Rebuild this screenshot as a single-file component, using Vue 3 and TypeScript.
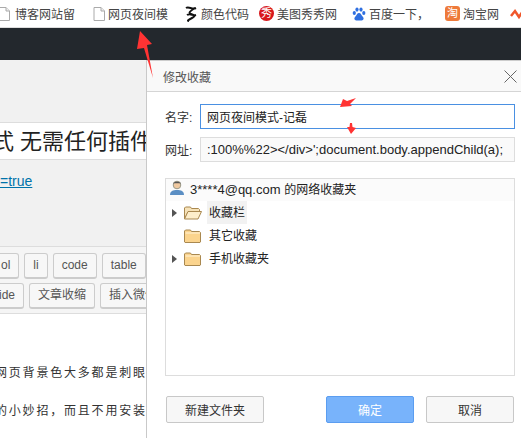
<script setup lang="ts">
const row1 = ['ol', 'li', 'code', 'table']
const row2 = ['ide', '文章收缩', '插入微信']
</script>

<template>
  <div class="root">
    <header class="bookmarks">
      <span class="mark m1"><svg class="ic" viewBox="0 0 12 14"><path d="M-1 .5h7l3.500 3.500v9.500H-1z" fill="#fff" stroke="#aaa"/><path d="M6 .5V4h3.500" fill="#eee" stroke="#aaa"/></svg>博客网站留</span>
      <span class="mark m2"><svg class="ic" viewBox="0 0 12 14"><path d="M1 .5h7l3.500 3.500v9.500H1z" fill="#fff" stroke="#aaa"/><path d="M8 .5V4h3.500" fill="#eee" stroke="#aaa"/></svg>网页夜间模</span>
      <span class="mark m3"><svg class="ic2" viewBox="0 0 14 16"><path d="M2 2c3-2 6 2 10 0M11 2C6 5 4 7 7 8s5 2 1 4-5 3-3 3M3 9c3-2 6 1 9 0" fill="none" stroke="#111" stroke-width="2"/></svg>颜色代码</span>
      <span class="mark m4"><span class="xiu">秀</span>美图秀秀网</span>
      <span class="mark m5"><svg class="ic3" viewBox="0 0 14 14"><g fill="#2f6fe0"><ellipse cx="2.300" cy="6" rx="1.600" ry="2"/><ellipse cx="5" cy="2.600" rx="1.600" ry="2.100"/><ellipse cx="9" cy="2.600" rx="1.600" ry="2.100"/><ellipse cx="11.800" cy="6" rx="1.600" ry="2"/><path d="M7 6c2 0 2 2 4 4 1.500 2 0 3.500-2 3.500H5c-2 0-3.500-1.500-2-3.500 2-2 2-4 4-4z"/></g></svg>百度一下，</span>
      <span class="mark m6"><span class="tao">淘</span>淘宝网</span>
      <svg class="ic4" viewBox="0 0 14 14"><path d="M1 9l4-5 4 6 4-6" fill="none" stroke="#f0562a" stroke-width="2.500"/></svg>
    </header>
    <div class="darkbar"></div>

    <main class="content">
      <section class="page">
        <div class="top-strip"></div>
        <h1 class="title">式 无需任何插件</h1>
        <div class="link-panel"><a class="link">=true</a></div>
        <div class="quick">
          <div class="qrow r1"><span v-for="t in row1" :key="t" class="qbtn">{{ t }}</span></div>
          <div class="qrow r2"><span v-for="t in row2" :key="t" class="qbtn">{{ t }}</span></div>
        </div>
        <div class="article">
          <p class="l1">网页背景色大多都是刺眼的</p>
          <p class="l2">的小妙招，而且不用安装任何</p>
        </div>
      </section>

      <section class="dialog">
        <div class="dhead">
          <span>修改收藏</span>
          <svg class="close" viewBox="0 0 13 13"><path d="M.5.5l12 12M12.500.5l-12 12" stroke="#666" fill="none"/></svg>
        </div>
        <div class="dbody">
          <div class="field">
            <label>名字:</label>
            <div class="inp active">网页夜间模式-记磊</div>
          </div>
          <div class="field f2">
            <label>网址:</label>
            <div class="inp url">:100%%22&gt;&lt;/div&gt;';document.body.appendChild(a);</div>
          </div>
          <div class="tree">
            <div class="account">
              <svg class="user" viewBox="0 0 16 16"><circle cx="8" cy="5" r="3.800" fill="#f0c9a0" stroke="#998"/><path d="M4 3.500C5 1 11 1 12 3.500 10 3 6 3 4 3.500z" fill="#555"/><path d="M1 15c0-4 3-5 7-5s7 1 7 5z" fill="#5b8fc4"/></svg>
              <span><span class="mail">3****4@qq.com </span>的网络收藏夹</span>
            </div>
            <div class="node">
              <span class="tri"></span>
              <svg class="folder" viewBox="0 0 18 14"><path d="M.5 13V2l1-1h5l1 1.500h7l1 1V6H4z" fill="#f6e2b8" stroke="#a98850"/><path d="M.5 13L4 5.500h13.500L14 13z" fill="#fdeecb" stroke="#a98850"/></svg>
              <span class="nlabel sel">收藏栏</span>
            </div>
            <div class="node">
              <span class="tri none"></span>
              <svg class="folder" viewBox="0 0 18 14"><path d="M1 13.500l-.5-.5V2l1-1h5l1 1.500h8l1 1V13l-.5.500z" fill="#fbd48e" stroke="#a98850"/><path d="M1.500 4h14.500" stroke="#fff3d8"/></svg>
              <span class="nlabel">其它收藏</span>
            </div>
            <div class="node">
              <span class="tri"></span>
              <svg class="folder" viewBox="0 0 18 14"><path d="M1 13.500l-.5-.5V2l1-1h5l1 1.500h8l1 1V13l-.5.500z" fill="#fbd48e" stroke="#a98850"/><path d="M1.500 4h14.500" stroke="#fff3d8"/></svg>
              <span class="nlabel">手机收藏夹</span>
            </div>
          </div>
          <div class="actions">
            <button class="btn new">新建文件夹</button>
            <span class="grow"></span>
            <button class="btn ok">确定</button>
            <button class="btn cancel">取消</button>
          </div>
        </div>
      </section>
    </main>

    <svg class="arrow a1" viewBox="0 0 20 50"><path d="M4 1L16 14 11 15 17 48 8 18 1 19z" fill="#f33"/></svg>
    <svg class="arrow a2" viewBox="0 0 18 12"><path d="M1 10L4 2 8 4 17 1 11 7 13 9z" fill="#f33"/></svg>
    <svg class="arrow a3" viewBox="0 0 11 13"><path d="M4 1L6 1 6.500 5 10 6 5 12 1 5 3.500 5z" fill="#f33"/></svg>
  </div>
</template>

<style>
html, body { margin: 0; padding: 0; background: #fff; overflow: hidden; }
</style>

<style scoped>
.root { position: relative; width: 521px; height: 438px; overflow: hidden; font-family: "Liberation Sans", "Noto Sans CJK SC", sans-serif; font-size: 12px; color: #333; }
.bookmarks { height: 27px; border-bottom: 1px solid #ddd; display: flex; align-items: center; white-space: nowrap; background: #fff; color: #444; overflow: hidden; }
.mark { display: inline-flex; align-items: center; gap: 3px; flex: none; }
.m1 { width: 93px; }
.m2 { width: 91px; }
.m3 { width: 75px; }
.m4 { width: 93px; }
.m5 { width: 93px; }
.m6 { width: 65px; }
.ic { width: 12px; height: 14px; flex: none; }
.ic2 { width: 14px; height: 16px; flex: none; }
.ic3 { width: 14px; height: 14px; flex: none; }
.ic4 { width: 14px; height: 14px; flex: none; }
.xiu { width: 15px; height: 15px; border-radius: 50%; background: #d8181c; color: #fff; font-size: 11px; line-height: 15px; text-align: center; flex: none; }
.tao { width: 15px; height: 15px; border-radius: 3px; background: #ee7a3a; color: #fff; font-size: 11px; line-height: 15px; text-align: center; flex: none; }
.darkbar { height: 32px; background: #23282d; }
.content { display: flex; height: 378px; }
.page { width: 146px; flex: none; overflow: hidden; background: #fff; display: flex; flex-direction: column; }
.top-strip { height: 62px; background: #f1f1f1; border-bottom: 1px solid #ddd; flex: none; }
.title { margin: 0 0 0 -8px; height: 35px; padding-top: 1px; flex: none; font-size: 22px; font-weight: 400; line-height: 35px; white-space: nowrap; color: #222; background: #fff; border-bottom: 1px solid #ddd; }
.link-panel { height: 87px; flex: none; background: #f1f1f1; box-sizing: border-box; padding-top: 13px; border-bottom: 1px solid #ddd; }
.link { display: block; color: #0073aa; text-decoration: underline; font-size: 14px; line-height: 16px; }
.quick { height: 67px; flex: none; background: #f5f5f5; box-sizing: border-box; padding-top: 6px; border-bottom: 1px solid #ddd; overflow: hidden; }
.qrow { display: flex; gap: 5px; white-space: nowrap; }
.r1 { margin-left: -8px; margin-bottom: 4px; }
.r2 { margin-left: -10px; }
.qbtn { flex: none; height: 23px; line-height: 23px; padding: 0 8px; border: 1px solid #ccc; border-bottom-width: 2px; border-radius: 3px; background: #f7f7f7; color: #555; font-size: 12px; }
.article { flex: 1; overflow: hidden; }
.article p { margin: 0; font-size: 12px; letter-spacing: 1.800px; white-space: nowrap; color: #333; line-height: 20px; }
.l1 { padding-top: 49px; margin-left: -5px !important; }
.l2 { padding-top: 18px; margin-left: -5px !important; }
.dialog { flex: 1; background: #fff; border-left: 1px solid #c9c9c9; border-top: 1px solid #ccc; display: flex; flex-direction: column; min-width: 0; }
.dhead { height: 30px; flex: none; background: #f9f9f9; border-bottom: 1px solid #d5d5d5; display: flex; align-items: center; justify-content: space-between; padding: 0 4px 0 16px; color: #555; font-size: 12px; }
.close { width: 13px; height: 13px; }
.dbody { padding: 12px 6px 0 18px; flex: 1; display: flex; flex-direction: column; }
.field { display: flex; align-items: center; height: 25px; flex: none; }
.f2 { margin-top: 8px; }
.field label { width: 35px; flex: none; color: #333; }
.inp { flex: 1; height: 100%; box-sizing: border-box; border: 1px solid #ddd; background: #fafafa; display: flex; align-items: center; padding-left: 6px; white-space: nowrap; overflow: hidden; font-size: 12px; color: #222; min-width: 0; }
.inp.active { border: 1px solid #4a90e2; background: #fff; }
.inp.url { font-size: 13px; }
.tree { margin-top: 16px; height: 198px; flex: none; box-sizing: border-box; border: 1px solid #ddd; background: #fff; font-size: 12px; color: #222; }
.account { height: 22px; box-sizing: border-box; padding: 0 0 4px 3px; background: #fbfbfb; display: flex; align-items: center; gap: 5px; }
.mail { font-size: 13px; }
.user { width: 16px; height: 16px; flex: none; }
.node { height: 23px; display: flex; align-items: center; padding-left: 6px; }
.tri { width: 0; height: 0; border-left: 5px solid #555; border-top: 4px solid transparent; border-bottom: 4px solid transparent; margin-right: 7px; }
.tri.none { border-left-color: transparent; }
.folder { width: 18px; height: 14px; flex: none; margin-right: 5px; }
.nlabel { padding: 1px 2px 0; line-height: 22px; }
.nlabel.sel { background: #f2f2f2; }
.actions { display: flex; margin-top: 20px; height: 27px; padding: 0 1px; flex: none; }
.grow { flex: 1; }
.btn { height: 27px; box-sizing: border-box; border: 1px solid #c8c8c8; border-radius: 2px; background: #f7f7f7; font: inherit; font-size: 12px; color: #333; padding: 0; }
.new { width: 98px; }
.ok { width: 88px; background: #78b3fb; border-color: #5b9df0; color: #fff; margin-right: 12px; }
.cancel { width: 88px; }
.arrow { position: absolute; }
.a1 { left: 136px; top: 30px; width: 20px; height: 50px; }
.a2 { left: 339px; top: 97px; width: 18px; height: 12px; }
.a3 { left: 346px; top: 122px; width: 11px; height: 13px; }
</style>
